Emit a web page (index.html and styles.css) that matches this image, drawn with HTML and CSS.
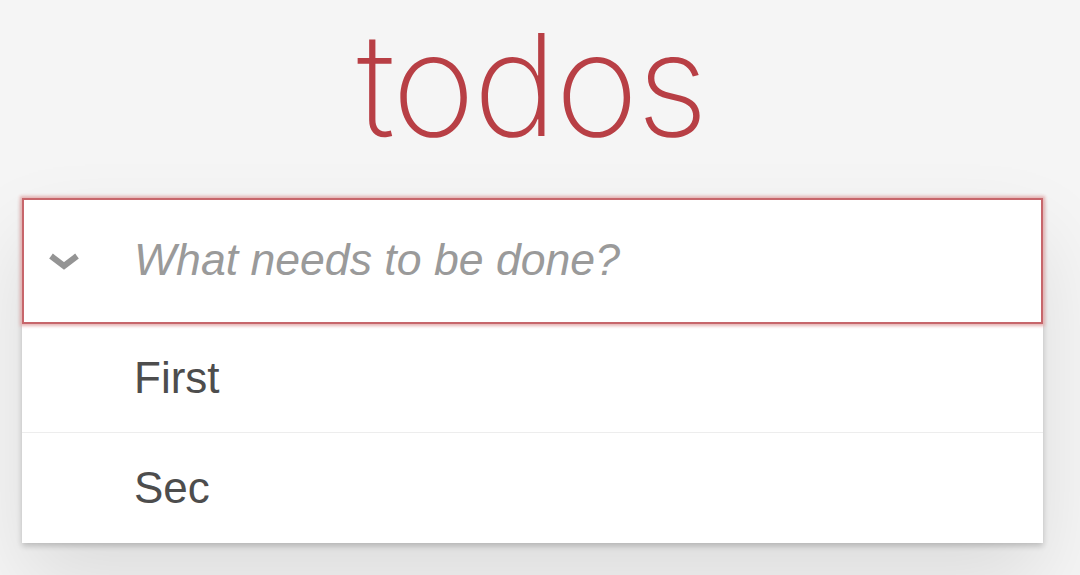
FILE: index.html
```html
<!DOCTYPE html>
<html lang="en">
<head>
<meta charset="utf-8">
<title>todos</title>
<link rel="stylesheet" href="styles.css">
</head>
<body>
<section class="todoapp">
  <header class="header">
    <h1 class="title">todos</h1>
  </header>
  <div class="card">
    <div class="new-row">
      <span class="toggle-all" aria-hidden="true">
        <svg width="32" height="22" viewBox="0 0 32 22"><path d="M3 5 L16 15 L29 5" fill="none" stroke="#949494" stroke-width="6" stroke-linejoin="miter"/></svg>
      </span>
      <input class="new-todo" placeholder="What needs to be done?" autofocus>
    </div>
    <ul class="todo-list">
      <li class="todo-item">First</li>
      <li class="todo-item">Sec</li>
    </ul>
  </div>
</section>
</body>
</html>
```
FILE: styles.css
```css
html, body {
  margin: 0;
  padding: 0;
}
body {
  background: #f5f5f5;
  font-family: "Liberation Sans", Arial, sans-serif;
  color: #4d4d4d;
  height: 575px;
  overflow: hidden;
}
.todoapp {
  width: 1021px;
  margin-left: 22px;
}
.header {
  height: 198px;
  display: flex;
  justify-content: center;
}
.title {
  margin: 0;
  font-family: "Inter", sans-serif;
  font-weight: 200;
  font-size: 142px;
  line-height: 1;
  color: #b83f45;
  padding-top: 13px;
  padding-right: 2px;
  letter-spacing: -2px;
}
.card {
  background: #fff;
  box-shadow: 0 3px 6px rgba(0,0,0,0.2), 0 40px 80px rgba(0,0,0,0.1);
}
.new-row {
  height: 126px;
  box-sizing: border-box;
  border: 2px solid #c7666b;
  box-shadow: 0 0 3px 2px #e5b3b3;
  display: flex;
  align-items: center;
  position: relative;
  z-index: 1;
}
.toggle-all {
  width: 110px;
  display: flex;
  padding-left: 24px;
  box-sizing: border-box;
  margin-top: 2px;
}
.new-todo {
  flex: 1;
  border: 0;
  outline: none;
  background: transparent;
  font-family: "Liberation Sans", Arial, sans-serif;
  font-size: 44.6px;
  color: #4d4d4d;
  padding: 0;
  margin-top: -2px;
}
.new-todo::placeholder {
  font-style: italic;
  color: #9a9a9a;
}
.todo-list {
  list-style: none;
  margin: 0;
  padding: 0;
}
.todo-item {
  height: 109px;
  box-sizing: border-box;
  padding-left: 112px;
  display: flex;
  align-items: center;
  font-size: 44px;
  color: #4d4d4d;
  border-bottom: 1px solid #ededed;
}
.todo-item:last-child {
  border-bottom: 0;
  height: 110px;
}
```
